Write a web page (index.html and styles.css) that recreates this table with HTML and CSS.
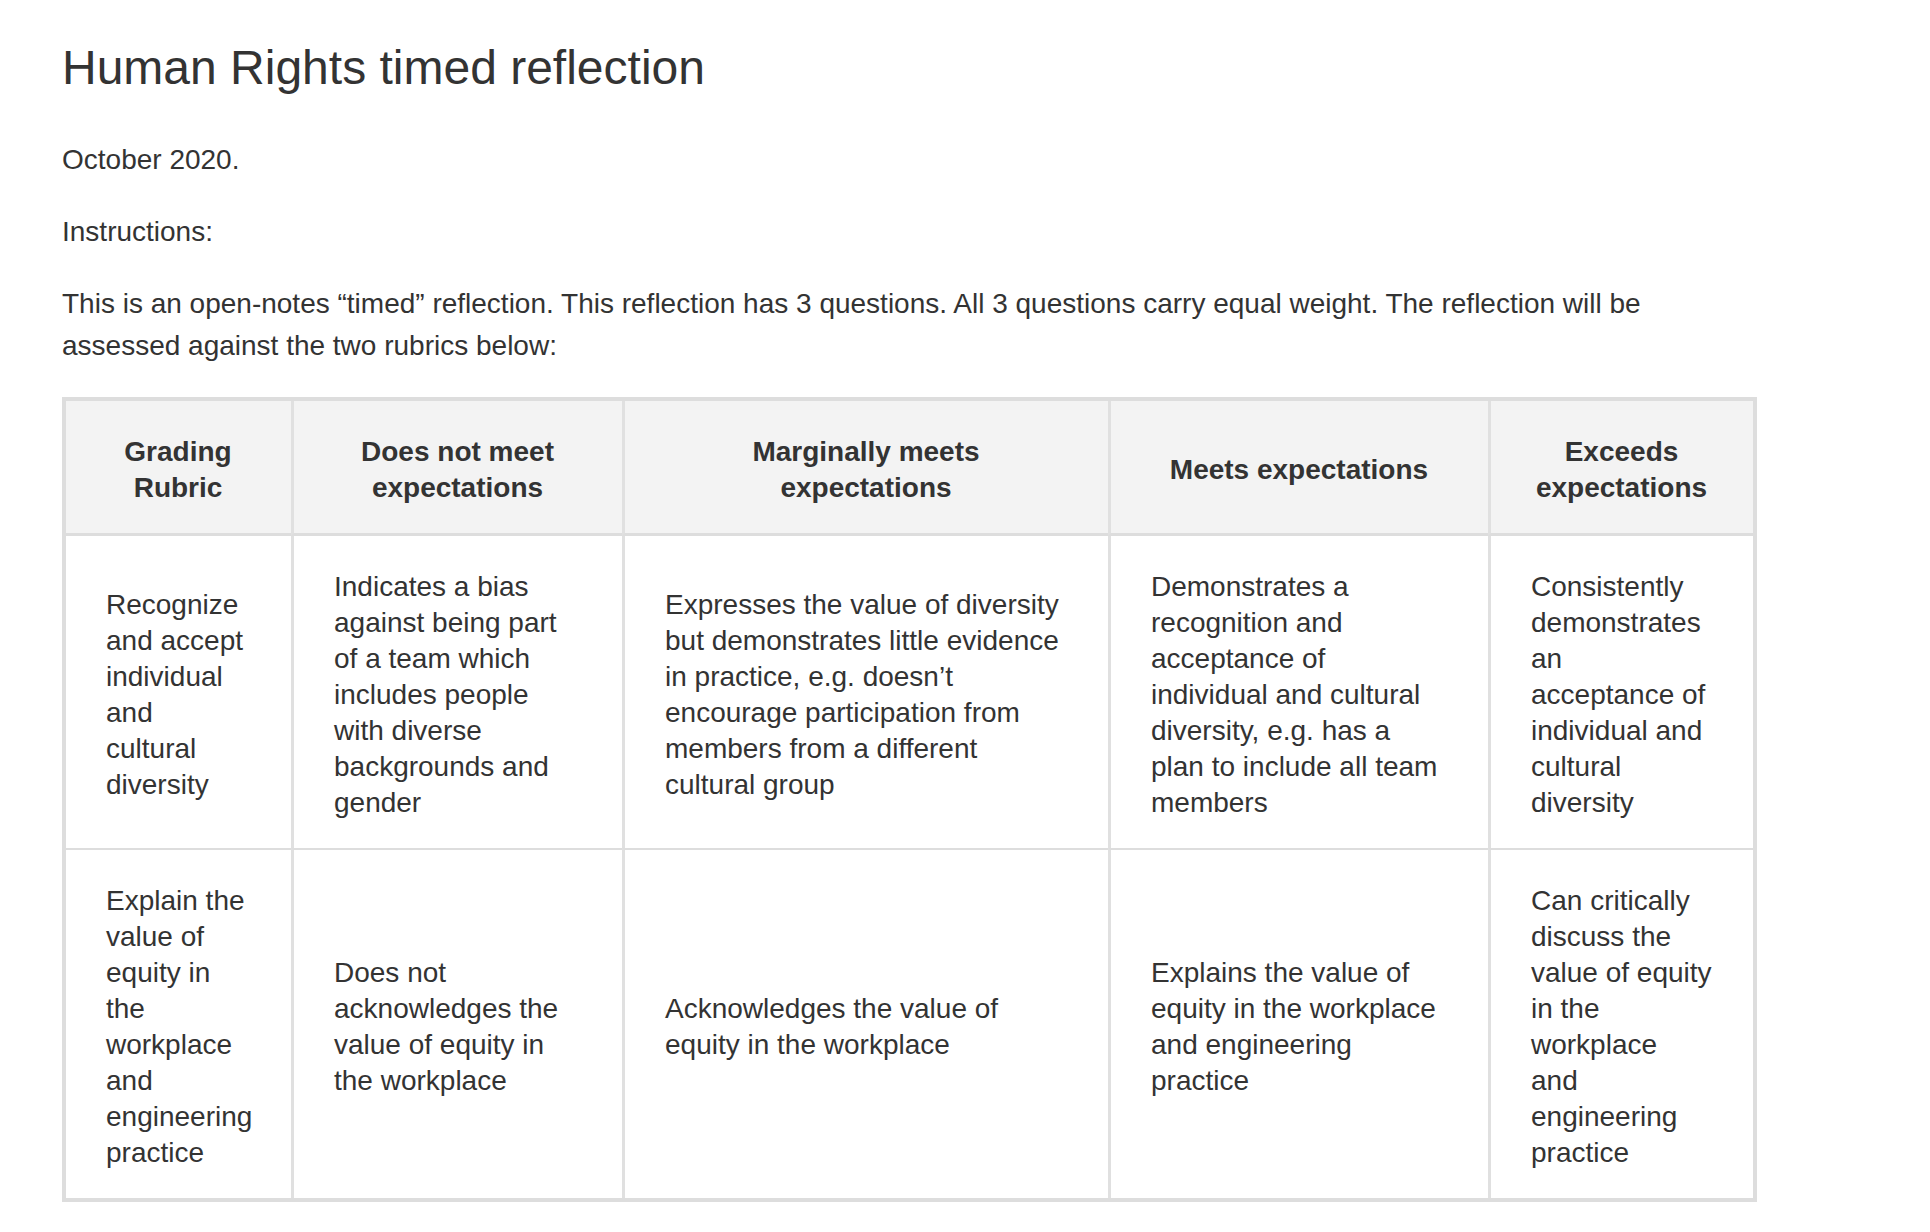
FILE: index.html
```html
<!DOCTYPE html>
<html lang="en">
<head>
<meta charset="utf-8">
<title>Human Rights timed reflection</title>
<link rel="stylesheet" href="styles.css">
</head>
<body>
<div class="page">
  <h1 class="title">Human Rights timed reflection</h1>
  <p class="text">October 2020.</p>
  <p class="text">Instructions:</p>
  <p class="text">This is an open-notes “timed” reflection. This reflection has 3 questions. All 3 questions carry equal weight. The reflection will be assessed against the two rubrics below:</p>
  <table class="rubric">
    <thead>
      <tr>
        <th class="col-criteria">Grading Rubric</th>
        <th class="col-below">Does not meet expectations</th>
        <th class="col-marginal">Marginally meets expectations</th>
        <th class="col-meets">Meets expectations</th>
        <th class="col-exceeds">Exceeds expectations</th>
      </tr>
    </thead>
    <tbody>
      <tr>
        <td>Recognize and accept individual and cultural diversity</td>
        <td>Indicates a bias against being part of a team which includes people with diverse backgrounds and gender</td>
        <td>Expresses the value of diversity but demonstrates little evidence in practice, e.g. doesn’t encourage participation from members from a different cultural group</td>
        <td>Demonstrates a recognition and acceptance of individual and cultural diversity, e.g. has a plan to include all team members</td>
        <td>Consistently demonstrates an acceptance of individual and cultural diversity</td>
      </tr>
      <tr>
        <td>Explain the value of equity in the workplace and engineering practice</td>
        <td>Does not acknowledges the value of equity in the workplace</td>
        <td>Acknowledges the value of equity in the workplace</td>
        <td>Explains the value of equity in the workplace and engineering practice</td>
        <td>Can critically discuss the value of equity in the workplace<br>and engineering practice</td>
      </tr>
    </tbody>
  </table>
</div>
</body>
</html>
```

FILE: styles.css
```css
html, body {
  margin: 0;
  background: #ffffff;
}

body {
  color: #333333;
  font-family: "Liberation Sans", Arial, Helvetica, sans-serif;
}

.page {
  width: 1695px;
  padding: 39px 62px 40px;
}

.title {
  margin: 0 0 42px;
  font-size: 48px;
  line-height: 58px;
  font-weight: 400;
  color: #333333;
}

.text {
  margin: 0 0 30px;
  font-size: 28px;
  line-height: 42px;
}

.rubric {
  width: 1695px;
  table-layout: fixed;
  border-collapse: separate;
  border-spacing: 0;
  border: 4px solid #dddddd;
  font-size: 28px;
  line-height: 36px;
}

.rubric th,
.rubric td {
  padding: 33px 41px 27px 40px;
  vertical-align: middle;
  text-align: left;
}

.rubric th {
  background: #f3f3f3;
  font-weight: 700;
  text-align: center;
  border-bottom: 3px solid #dddddd;
}

.rubric th + th,
.rubric td + td {
  border-left: 3px solid #e0e0e0;
}

.rubric tbody tr + tr td {
  border-top: 2px solid #dddddd;
}

.col-criteria { width: 144px; }
.col-below { width: 247px; }
.col-marginal { width: 402px; }
.col-meets { width: 296px; }
```
